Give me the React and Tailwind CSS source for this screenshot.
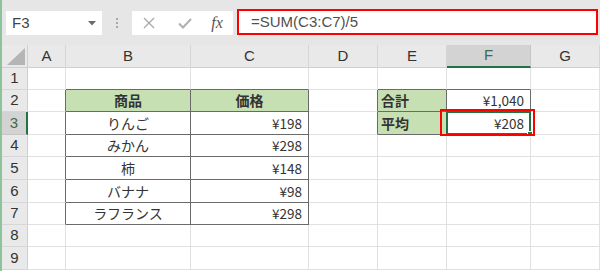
import React from 'react';
import clsx from 'clsx';

const cols = ['A', 'B', 'C', 'D', 'E', 'F', 'G'];
const rowHeights = ['h-[22px]', 'h-[22px]', 'h-[23px]', 'h-[22px]', 'h-[23px]', 'h-[23px]', 'h-[22px]', 'h-[22px]', 'h-[23px]'];

// cells keyed by "row-col"
const cells = {
  '2-1': { text: '商品', align: 'center', bold: true, green: true },
  '2-2': { text: '価格', align: 'center', bold: true, green: true },
  '2-4': { text: '合計', align: 'left', bold: true, green: true },
  '2-5': { text: '¥1,040', align: 'right' },
  '3-1': { text: 'りんご', align: 'center' },
  '3-2': { text: '¥198', align: 'right' },
  '3-4': { text: '平均', align: 'left', bold: true, green: true },
  '3-5': { text: '¥208', align: 'right', selected: true },
  '4-1': { text: 'みかん', align: 'center' },
  '4-2': { text: '¥298', align: 'right' },
  '5-1': { text: '柿', align: 'center' },
  '5-2': { text: '¥148', align: 'right' },
  '6-1': { text: 'バナナ', align: 'center' },
  '6-2': { text: '¥98', align: 'right' },
  '7-1': { text: 'ラフランス', align: 'center' },
  '7-2': { text: '¥298', align: 'right' },
};

const inTable = (r, c) =>
  (r >= 2 && r <= 7 && (c === 1 || c === 2)) || (r >= 2 && r <= 3 && (c === 4 || c === 5));

const Cell = ({ r, c }) => {
  const cell = cells[`${r}-${c}`] || {};
  const rightDark = inTable(r, c) || inTable(r, c + 1);
  const bottomDark = inTable(r, c) || inTable(r + 1, c);
  return (
    <div
      className={clsx(
        'relative flex items-center border-r border-b text-[#333]',
        rightDark ? 'border-r-[#6a6a6a]' : 'border-r-[#e1e1e1]',
        bottomDark ? 'border-b-[#6a6a6a]' : 'border-b-[#e1e1e1]',
        cell.green && 'bg-[#c6e0b4]',
        cell.bold && 'font-bold',
        cell.align === 'center' && 'justify-center text-[14px]',
        cell.align === 'right' && 'justify-end pr-[6px] text-[13.5px]',
        cell.align === 'left' && 'justify-start pl-[3px] text-[14px]'
      )}
    >
      {cell.text}
      {cell.selected && (
        <>
          <div className="absolute -inset-[1px] border-2 border-[#217346] z-10">
            <div className="absolute -right-[4px] -bottom-[4px] w-[6px] h-[6px] bg-[#217346] border border-white" />
          </div>
          <div className="absolute -left-[7px] -top-[3px] -right-[5px] -bottom-[2px] border-2 border-[#f00] z-20" />
        </>
      )}
    </div>
  );
};

export default function App() {
  return (
    <div
      className="w-[600px] h-[271px] overflow-hidden bg-white border-l-2 border-[#8cc39b] flex flex-col"
      style={{ fontFamily: '"Noto Sans CJK JP", "Liberation Sans", sans-serif' }}
    >
      {/* formula bar */}
      <div className="h-[45px] bg-[#e6e6e6] flex items-start pt-[11px] shrink-0">
        <div className="ml-[4px] w-[96px] h-[24px] bg-white flex items-center justify-between pl-[6px] pr-[6px]">
          <span className="text-[15px] text-[#444]" style={{ fontFamily: '"Liberation Sans", sans-serif' }}>F3</span>
          <svg width="8" height="5" viewBox="0 0 8 5">
            <path d="M0 0 H8 L4 4.5 Z" fill="#6b6b6b" />
          </svg>
        </div>
        <div className="w-[30px] h-[24px] flex flex-col items-center justify-center gap-[2px]">
          <span className="w-[2px] h-[2px] bg-[#a8a8a8]" />
          <span className="w-[2px] h-[2px] bg-[#a8a8a8]" />
          <span className="w-[2px] h-[2px] bg-[#a8a8a8]" />
        </div>
        <div className="w-[101px] h-[24px] bg-white flex items-center">
          <div className="w-[34px] flex justify-center">
            <svg width="12" height="12" viewBox="0 0 12 12">
              <path d="M1 1 L11 11 M11 1 L1 11" stroke="#a9a9a9" strokeWidth="1.3" />
            </svg>
          </div>
          <div className="w-[38px] flex justify-center">
            <svg width="14" height="11" viewBox="0 0 14 11">
              <path d="M1 5.5 L5 9.5 L13 1" stroke="#b0b0b0" strokeWidth="2" fill="none" />
            </svg>
          </div>
          <div
            className="w-[26px] flex justify-center italic text-[16px] text-[#555]"
            style={{ fontFamily: '"Liberation Serif", serif' }}
          >
            fx
          </div>
        </div>
        <div className="ml-[4px] -mt-[2px] w-[361px] h-[26px] border-2 border-[#f00] bg-white flex items-center pl-[12px]">
          <span className="text-[15px] text-[#505050]" style={{ fontFamily: '"Liberation Sans", sans-serif' }}>
            =SUM(C3:C7)/5
          </span>
        </div>
      </div>

      {/* sheet */}
      <div className="grid grid-cols-[26px_38px_125px_118px_69px_69px_84px_1fr]">
        {/* column header row */}
        <div className="h-[23px] bg-[#e9e9e9] border-r border-b border-[#cfcfcf] flex items-end justify-end pr-[2px] pb-[2px]">
          <svg width="18" height="17" viewBox="0 0 18 17">
            <path d="M18 0 V17 H0 Z" fill="#b5b5b5" />
          </svg>
        </div>
        {cols.map((c) => (
          <div
            key={c}
            className={clsx(
              'h-[23px] flex items-center justify-center text-[15px] border-r',
              c === 'F'
                ? 'bg-[#d3d3d3] border-b-2 border-b-[#217346] border-r-[#c6c6c6] text-[#3d6b4f]'
                : 'bg-[#e9e9e9] border-b border-b-[#cfcfcf] border-r-[#d6d6d6] text-[#333]'
            )}
            style={{ fontFamily: '"Liberation Sans", sans-serif' }}
          >
            {c}
          </div>
        ))}

        {rowHeights.map((h, ri) => {
          const r = ri + 1;
          return (
            <React.Fragment key={r}>
              <div
                className={clsx(
                  h,
                  'flex items-center justify-center text-[15px] border-b',
                  r === 3
                    ? 'bg-[#d3d3d3] border-r-2 border-r-[#217346] border-b-[#c6c6c6] text-[#3d6b4f]'
                    : 'bg-[#e9e9e9] border-r border-r-[#cfcfcf] border-b-[#d6d6d6] text-[#333]'
                )}
                style={{ fontFamily: '"Liberation Sans", sans-serif' }}
              >
                {r}
              </div>
              {cols.map((c, ci) => (
                <Cell key={c} r={r} c={ci} />
              ))}
            </React.Fragment>
          );
        })}
      </div>
    </div>
  );
}
